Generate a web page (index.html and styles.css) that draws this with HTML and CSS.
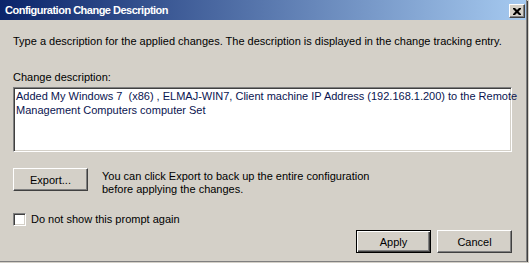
FILE: index.html
```html
<!DOCTYPE html>
<html lang="en">
<head>
  <meta charset="UTF-8" />
  <title>Configuration Change Description</title>
  <link rel="stylesheet" href="styles.css">
</head>
<body>

<div class="window">
  <div class="titlebar">
    <span class="title">Configuration Change Description</span>
    <button class="close-btn" aria-label="Close">
      <svg width="8" height="7" viewBox="0 0 8 7">
        <path d="M0 0h2l2 2 2-2h2v1l-2.5 2.5L8 6v1H6L4 5 2 7H0V6l2.5-2.5L0 1z" fill="#000"/>
      </svg>
    </button>
  </div>

  <div class="content">
    <p class="intro">Type a description for the applied changes. The description is displayed in the change tracking entry.</p>

    <label class="field-label">Change description:</label>
    <div class="desc-box">Added My Windows 7  (x86) , ELMAJ-WIN7, Client machine IP Address (192.168.1.200) to the Remote
Management Computers computer Set</div>

    <div class="export-row">
      <button class="btn">Export...</button>
      <p class="export-note">You can click Export to back up the entire configuration<br>before applying the changes.</p>
    </div>

    <label class="check-row">
      <span class="checkbox"></span>
      Do not show this prompt again
    </label>

    <div class="actions">
      <button class="btn default">Apply</button>
      <button class="btn">Cancel</button>
    </div>
  </div>
</div>

</body>
</html>
```

FILE: styles.css
```css
body {
  margin: 0;
  background: #d4d0c8;
  font-family: "Liberation Sans", Arial, sans-serif;
  font-size: 11px;
  color: #000;
}

.window {
  box-sizing: border-box;
  width: 527px;
  height: 262px;
  background: #d4d0c8;
  border-right: 1px solid #808080;
  border-bottom: 1px solid #808080;
  box-shadow: 1px 1px 0 #404040;
}

.titlebar {
  height: 20px;
  display: flex;
  align-items: center;
  justify-content: space-between;
  padding: 0 1px 0 5px;
  background: linear-gradient(to right, #0a246a, #a6caf0);
}

.title {
  color: #fff;
  font-weight: bold;
  font-size: 11px;
  letter-spacing: -0.5px;
}

.close-btn {
  box-sizing: border-box;
  width: 16px;
  height: 14px;
  margin-top: 2px;
  padding: 0;
  display: flex;
  align-items: center;
  justify-content: center;
  background: #d4d0c8;
  border: 1px solid;
  border-color: #fff #404040 #404040 #fff;
  box-shadow: inset -1px -1px #808080;
}

.content {
  padding: 15px 14px 0 13px;
  display: flex;
  flex-direction: column;
}

.intro {
  margin: 0;
  line-height: 13px;
}

.field-label {
  margin-top: 23px;
  line-height: 13px;
}

.desc-box {
  box-sizing: border-box;
  margin-top: 3px;
  height: 65px;
  padding: 1px 2px;
  background: #fff;
  color: #0a1450;
  line-height: 14px;
  white-space: pre;
  border: 1px solid;
  border-color: #808080 #fff #fff #808080;
  box-shadow: inset 1px 1px #404040, inset -1px -1px #d4d0c8;
}

.export-row {
  display: flex;
  align-items: flex-start;
  gap: 14px;
  margin-top: 16px;
}

.export-note {
  margin: 2px 0 0;
  line-height: 13px;
}

.btn {
  box-sizing: border-box;
  width: 75px;
  height: 23px;
  padding: 0;
  font: inherit;
  color: #000;
  background: #d4d0c8;
  border: 1px solid;
  border-color: #fff #404040 #404040 #fff;
  box-shadow: inset -1px -1px #808080;
}

.btn.default {
  border-color: #000;
  box-shadow: inset 1px 1px #fff, inset -1px -1px #404040, inset -2px -2px #808080;
}

.check-row {
  display: flex;
  align-items: center;
  gap: 5px;
  margin-top: 17px;
  line-height: 13px;
}

.checkbox {
  box-sizing: border-box;
  width: 13px;
  height: 13px;
  background: #fff;
  border: 1px solid;
  border-color: #808080 #fff #fff #808080;
  box-shadow: inset 1px 1px #404040, inset -1px -1px #d4d0c8;
}

.actions {
  display: flex;
  justify-content: flex-end;
  gap: 6px;
  margin-top: 4px;
}
```
